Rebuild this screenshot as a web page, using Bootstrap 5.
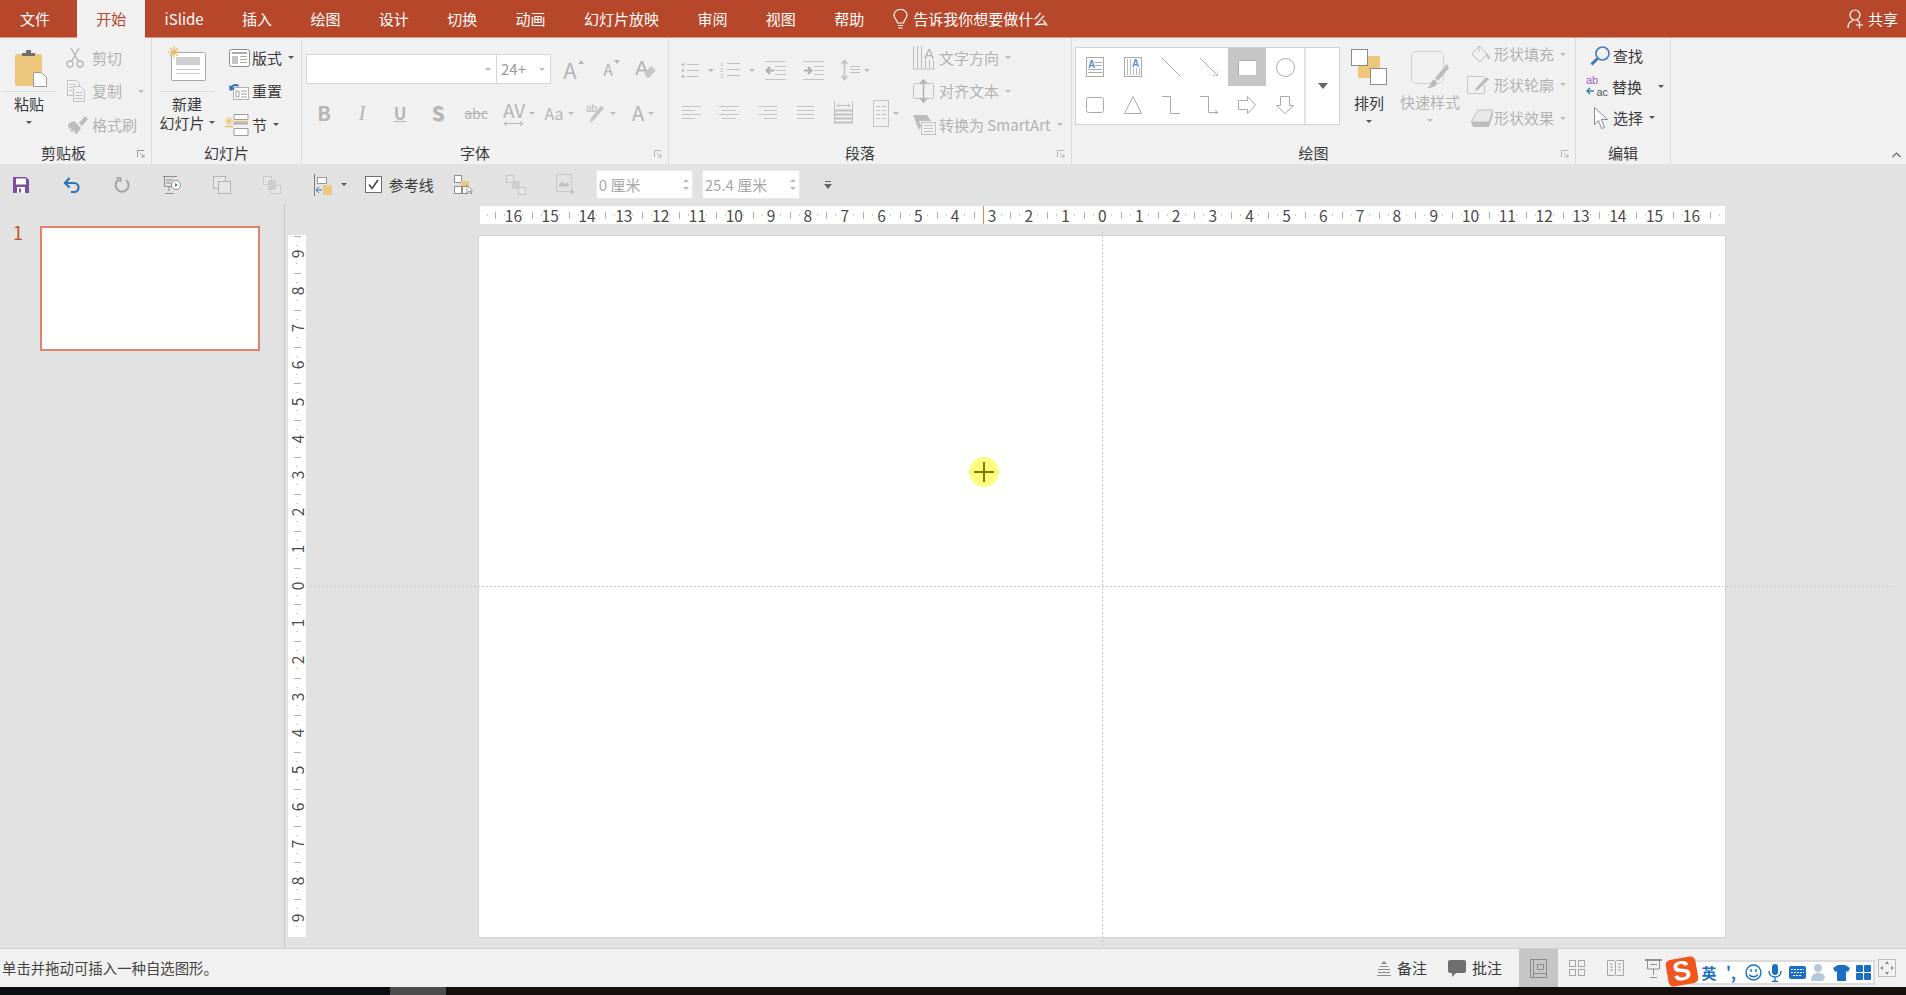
<!DOCTYPE html>
<html lang="zh-CN">
<head>
  <meta charset="UTF-8" />
  <title>PowerPoint</title>
  <link href="https://cdn.jsdelivr.net/npm/bootstrap@5.3.2/dist/css/bootstrap.min.css" rel="stylesheet">
  <style>
    html, body { height: 100%; }
    body { overflow: hidden; background: #0b0c0e; font-family: "Noto Sans CJK SC", "Liberation Sans", sans-serif; font-size: 15px; line-height: 20px; color: #3a3a3a; }
    svg { display: block; flex: none; }
    svg text { font-family: "Liberation Sans", sans-serif; }
    .app { width: 1906px; height: 995px; }

    .tabbar { height: 38px; background: #b7472a; border-bottom: 1px solid #dc9b87; color: #fff; }
    .tabx { padding: 0 19.2px; line-height: 37px; white-space: nowrap; }
    .tabx.file { padding: 0 27px 0 20px; }
    .tabx.on { background: #f1f1f1; color: #b7472a; height: 38px; margin-bottom: -1px; }
    .tellme { margin-left: 10px; line-height: 37px; gap: 5px; }
    .sharebox { margin-left: auto; padding-right: 8px; gap: 4px; line-height: 37px; }

    .ribbon { height: 126px; background: #f1f1f1; }
    .rgroup { border-right: 1px solid #dcdcdc; flex: none; }
    .g1 { width: 152px; } .g2 { width: 150px; } .g3 { width: 367px; } .g4 { width: 403px; } .g5 { width: 504px; } .g6 { width: 95px; }
    .rbody { height: 104px; }
    .rlabel { height: 22px; line-height: 22px; text-align: center; position: relative; }
    .lab24 { padding-right: 24px; } .lab20 { padding-right: 20px; }
    .launch { position: absolute; right: 6px; top: 8px; }
    .off { color: #b2b2b2; }
    .caret { width: 0; height: 0; border-left: 3px solid transparent; border-right: 3px solid transparent; border-top: 3px solid #555; flex: none; }
    .off .caret, .caret.dim { border-top-color: #bbb; }

    .bigbtn { flex: none; }
    .bigtop { height: 54px; border-bottom: 1px solid #dcdcdc; }
    .pastetop { padding: 12px 0 0 3px; }
    .bigtxt { line-height: 19px; white-space: nowrap; }
    .tp2 { padding-top: 2px; }
    .b1 { width: 54px; margin-left: 2px; }
    .b2 { width: 56px; margin-left: 7px; }
    .stk { padding-top: 3px; flex: none; }
    .itm { height: 33.5px; white-space: nowrap; }
    .ico { width: 26px; flex: none; }
    .ico27 { width: 27px; flex: none; }
    .s1 { margin-left: 10px; }
    .s2 { margin-left: 10px; }
    .capgap { margin-left: 6px; }

    .fontarea { margin-left: 3px; padding-top: 16px; }
    .fbox { height: 30px; background: #fff; border: 1px solid #d6d6d6; padding: 0 5px 0 4px; color: #9a9a9a; }
    .fname { width: 190px; margin-left: 1px; border-right: 0; justify-content: flex-end; }
    .fsize { width: 55px; justify-content: space-between; }
    .fcell { height: 30px; font-size: 20px; color: #b5b5b5; }
    .w38 { width: 38px; } .w42 { width: 42px; } .w28 { width: 28px; } .w46 { width: 46px; } .w48 { width: 48px; }
    .hang { margin-left: 4px; margin-right: -10px; }
    .hang2 { margin-left: 9px; margin-right: -15px; }
    .sup { margin-left: 1px; margin-right: -7px; margin-bottom: 14px; }
    .frow2 { margin-top: 14px; }
    .fb { font-weight: 700; }
    .fi { font-style: italic; font-family: "Liberation Serif", serif; }
    .fu { text-decoration: underline; font-size: 17px; font-weight: 700; }
    .fs { font-weight: 700; text-shadow: 1px 1px 0 #ccc; }
    .fabc { text-decoration: line-through; font-size: 14px; }
    .fav { font-size: 19px; line-height: 20px; }
    .faa { font-size: 16px; }
    .fbig { font-size: 22px; }

    .paraleft { width: 244px; flex: none; padding-top: 17px; }
    .prow1 { height: 30px; margin-left: 2px; }
    .prow2 { height: 30px; margin-left: 3px; margin-top: 13px; }

    .gallery { margin: 9px 0 0 3px; width: 265px; height: 78px; background: #fff; border: 1px solid #d2d2d2; flex: none; }
    .gcells { width: 228px; display: grid; grid-template-columns: repeat(6, 38px); grid-auto-rows: 38px; }
    .gcell.sel { background: #c6c6c6; }
    .gscroll { width: 36px; border-left: 2px solid #e2e2e2; }
    .tri { width: 0; height: 0; border-left: 5px solid transparent; border-right: 5px solid transparent; border-top: 6px solid #666; }
    .arr { width: 50px; margin-left: 4px; padding-top: 11px; flex: none; }
    .qstyle { width: 60px; margin-left: 6px; padding-top: 13px; flex: none; }
    .bigtxt2 { line-height: 19px; white-space: nowrap; }
    .qtxt { padding-top: 3px; }
    .s3 { margin-left: 7px; padding-top: 1px; flex: none; }
    .s3 .itm { height: 30.5px; }
    .s3 .itm.low { margin-top: 3px; }
    .s4 { margin-left: 10px; padding-top: 2px; }
    .s4 .itm { height: 31px; }
    .chev { padding: 0 5px 6px 0; }

    .work { height: 784px; background: #e2e2e2; position: relative; overflow: hidden; }
    .qat { height: 41px; flex: none; }
    .qfirst { gap: 30.3px; padding-left: 11px; }
    .qi { width: 20px; flex: none; }
    .chk { margin-left: 18px; gap: 7px; }
    .qs1 { margin-left: 20px; } .qs2 { margin-left: 32px; } .qs3 { margin-left: 30px; }
    .qin { width: 97px; height: 29px; background: #fff; border: 1px solid #e8e8e8; padding: 0 3px 0 2px; color: #a8a8a8; white-space: nowrap; justify-content: space-between; }
    .qin1 { margin-left: 20px; } .qin2 { margin-left: 9px; width: 98px; }
    .spin i { display: block; width: 0; height: 0; border-left: 3px solid transparent; border-right: 3px solid transparent; }
    .spin i:first-child { border-bottom: 3px solid #bbb; margin-bottom: 5px; }
    .spin i:last-child { border-top: 3px solid #bbb; }
    .qdrop { margin-left: 24px; }

    .mainrow { height: 743px; }
    .leftpane { width: 285px; flex: none; border-right: 1px solid #c8c8c8; margin-top: -1px; padding: 22px 0 0 13px; }
    .slidenum { color: #c0502f; width: 27px; line-height: 20px; font-size: 18px; margin-top: -4px; }
    .thumb { width: 220px; height: 125px; background: #fff; border: 2px solid #e2826b; }
    .canvasarea { flex: 1 1 auto; position: relative; }
    .hruler { width: 1245px; height: 18px; background: #fff; margin: 1px 0 0 195px; position: relative; }
    .rowcv { margin-top: 11px; }
    .vruler { width: 18px; height: 702px; background: #fff; margin-left: 3px; padding-top: 1px; flex: none; }
    .slide { width: 1248px; height: 703px; margin-left: 172px; background: #fff; border: 1px solid #d2d2d2; flex: none; }

    .hcell, .vcell { flex: none; display: flex; align-items: center; justify-content: center; font-size: 15.5px; line-height: 18px; color: #4a4a4a; white-space: nowrap; background-repeat: no-repeat; background-image: linear-gradient(#b0b0b0, #b0b0b0), linear-gradient(#ccc, #ccc), linear-gradient(#ccc, #ccc); }
    .hcell { width: 36.82px; height: 18px; background-size: 1px 7px, 1px 2px, 1px 2px; background-position: 0 center, 9px center, 27px center; }
    .vcell { height: 36.85px; width: 18px; background-size: 7px 1px, 2px 1px, 2px 1px; background-position: center 0, center 9px, center 27px; }
    .vcell span { transform: rotate(-90deg); }
    .hedge { flex: none; height: 18px; background-repeat: no-repeat; background-image: linear-gradient(#b0b0b0, #b0b0b0), linear-gradient(#ccc, #ccc); }
    .hedgel { width: 15px; background-size: 0 0, 1px 2px; background-position: 0 center, 7px center; }
    .hedger { width: 15px; background-size: 1px 7px, 1px 2px; background-position: 0 center, 9px center; }

    .guidev { position: absolute; left: 817px; top: 23px; width: 1px; height: 720px; background: repeating-linear-gradient(to bottom, #c9c9c9 0 2px, transparent 2px 4px); }
    .guideh { position: absolute; left: 25px; top: 381px; width: 1585px; height: 1px; background: repeating-linear-gradient(to right, #c9c9c9 0 2px, transparent 2px 4px); }
    .rmark { position: absolute; left: 503px; top: 0; width: 1px; height: 18px; background: #e8825a; }
    .pointer { position: absolute; left: 683.5px; top: 252px; width: 30px; height: 30px; border-radius: 50%; background: #fdfd80; }

    .statusbar { height: 39px; background: #f1f1f1; border-top: 1px solid #d0d0d0; position: relative; }
    .stext { padding-left: 2px; font-size: 14.4px; color: #444; white-space: nowrap; }
    .sright { margin-left: auto; padding-right: 10px; height: 100%; }
    .sbtn { white-space: nowrap; gap: 6px; }
    .sgap1 { margin-left: 21px; }
    .sgap2 { margin-left: 17px; }
    .vbtn { width: 38px; height: 100%; }
    .vbtn.on { background: #c6c6c6; width: 39px; }
    .zfit { margin-left: 206px; }

    .imebar { position: absolute; left: 1686px; top: 11px; width: 189px; height: 25px; background: #fff; border: 2px solid #dcdcdc; padding-left: 10px; }
    .imeitem { width: 22px; flex: none; color: #1a6fc4; }
    .imetxt { font-weight: 700; font-size: 15px; }
    .imelogo { position: absolute; left: 1667px; top: 9px; width: 30px; height: 27px; border-radius: 5px; background: #f0561e; color: #fff; font: 900 27px/27px "Liberation Sans", sans-serif; text-align: center; transform: rotate(-10deg); }

    .bstrip { height: 8px; }
    .bs1 { width: 390px; background: #0b0d10; } .bs2 { width: 56px; background: #4c4c4c; } .bs3 { flex: 1 1 auto; background: #15100d; }
  </style>
</head>
<body>
<div class="app d-flex flex-column">

  <!-- tabs -->
  <div class="tabbar d-flex align-items-start">
    <div class="tabx file">文件</div>
    <div class="tabx on">开始</div>
    <div class="tabx">iSlide</div>
    <div class="tabx">插入</div>
    <div class="tabx">绘图</div>
    <div class="tabx">设计</div>
    <div class="tabx">切换</div>
    <div class="tabx">动画</div>
    <div class="tabx">幻灯片放映</div>
    <div class="tabx">审阅</div>
    <div class="tabx">视图</div>
    <div class="tabx">帮助</div>
    <div class="tellme d-flex align-items-center">
      <svg width="15" height="20" viewBox="0 0 15 20" fill="none" stroke="#fff" stroke-width="1.2"><path d="M4.5 14c0-3-3.5-4-3.5-8a6.5 5.5 0 0 1 13 0c0 4-3.5 5-3.5 8z"/><path d="M5 16.5h5M5.5 19h4"/></svg>
      <span>告诉我你想要做什么</span>
    </div>
    <div class="sharebox d-flex align-items-center">
      <svg width="17" height="20" viewBox="0 0 17 20" fill="none" stroke="#fff" stroke-width="1.2"><circle cx="8" cy="6" r="5"/><path d="M1 19c0-5 2-6 5-7.5M10 11.5l2 1M9 16h7M12.5 12.5v7"/></svg>
      <span>共享</span>
    </div>
  </div>

  <!-- ribbon -->
  <div class="ribbon d-flex">
    <div class="rgroup g1">
      <div class="rbody d-flex">
        <div class="bigbtn b1 text-center">
          <div class="bigtop pastetop d-flex justify-content-center">
            <svg width="34" height="37" viewBox="0 0 34 37"><rect x="1" y="4" width="27" height="32" rx="2" fill="#edc77c"/><path d="M8 6V3h4V0h5v3h4v3z" fill="#6f6f6f"/><path d="M19.500 22.500h8l5 5v9h-13z" fill="#fff" stroke="#9a9a9a"/></svg>
          </div>
          <div class="bigtxt tp2">粘贴</div>
          <div class="d-flex justify-content-center mt-2"><div class="caret"></div></div>
        </div>
        <div class="stk s1 off d-flex flex-column">
          <div class="itm d-flex align-items-center"><div class="ico"><svg width="18" height="21" viewBox="0 0 18 21" fill="none" stroke="#b8b8b8" stroke-width="1.4"><circle cx="4" cy="17" r="3"/><circle cx="14" cy="17" r="3"/><path d="M5.500 14.500 13 1M12.500 14.500 5 1"/></svg></div><span>剪切</span></div>
          <div class="itm d-flex align-items-center"><div class="ico"><svg width="20" height="24" viewBox="0 0 20 24" fill="#f1f1f1" stroke="#c2c2c2"><path d="M1.500 1.500h9l3 3v12h-12z"/><path d="M7.500 7.500h7l4 4v11h-11z"/><path d="M3.500 5.500h6M3.500 8.500h3M3.500 11.500h3M9.500 13.500h7M9.500 16.500h7M9.500 19.500h7"/></svg></div><span>复制</span><div class="caret dim ms-3"></div></div>
          <div class="itm d-flex align-items-center"><div class="ico"><svg width="22" height="18" viewBox="0 0 22 18" fill="#bcbcbc"><path d="M13 7 19 0l3 3-6 7z"/><path d="M2 8l6-3 7 7-4 6-3-1 1-3-3 2-2-1 2-3-3 1z"/></svg></div><span>格式刷</span></div>
        </div>
      </div>
      <div class="rlabel lab24">剪贴板
        <svg class="launch" width="8" height="8" viewBox="0 0 8 8" fill="none" stroke="#9a9a9a"><path d="M.5 7V.5H7M3 3l4 4M7 4.500V7H4.500"/></svg>
      </div>
    </div>

    <div class="rgroup g2">
      <div class="rbody d-flex">
        <div class="bigbtn b2 text-center">
          <div class="bigtop d-flex justify-content-center">
            <svg class="mt-2" width="38" height="35" viewBox="0 0 38 35"><rect x="3.500" y="6.500" width="34" height="28" rx="1" fill="#fff" stroke="#a8a8a8"/><rect x="8" y="11" width="24" height="8" fill="#cfcfcf"/><path d="M8 23.500h24M8 27.500h24" stroke="#c8c8c8"/><path d="M6 0v12M0 6h12M2 2l8 8M10 2l-8 8" stroke="#eeb868" stroke-width="1.2"/></svg>
          </div>
          <div class="bigtxt tp2">新建</div>
          <div class="bigtxt d-flex align-items-center justify-content-center">幻灯片<div class="caret ms-1"></div></div>
        </div>
        <div class="stk s2 d-flex flex-column">
          <div class="itm d-flex align-items-center"><div class="ico27"><svg class="ms-1" width="21" height="18" viewBox="0 0 21 18" fill="none" stroke="#8a8a8a"><rect x=".5" y=".5" width="20" height="17" rx="2" fill="#fff"/><path d="M3 4h15" stroke="#aaa" stroke-width="2"/><rect x="3" y="7" width="6" height="8" fill="#c4c4c4" stroke="none"/><path d="M11 7.500h7M11 10.500h7M11 13.500h7" stroke="#aaa"/></svg></div><span>版式</span><div class="caret capgap"></div></div>
          <div class="itm d-flex align-items-center"><div class="ico27"><svg class="ms-1" width="20" height="17" viewBox="0 0 20 17" fill="none"><rect x="4.500" y="4.500" width="15" height="12" fill="#fff" stroke="#b0b0b0"/><path d="M7 8h3v6H7zM12 8h6M12 11h6M12 14h6" stroke="#9c9c9c"/><path d="M1.500 7a5 5 0 0 1 8-4" stroke="#2e75b6" stroke-width="2"/><path d="M0 2l1 6 5-2z" fill="#2e75b6"/></svg></div><span>重置</span></div>
          <div class="itm d-flex align-items-center"><div class="ico27"><svg width="24" height="22" viewBox="0 0 24 22" fill="none"><path d="M4 3v8M0 7h8M1 4l6 6M7 4l-6 6" stroke="#eeb868"/><path d="M9 .5h14v5H9z" fill="#fff" stroke="#9c9c9c"/><path d="M9 7.500h14M0 12.500h8" stroke="#eeb868" stroke-width="1.500"/><path d="M8 9.500h15" stroke="#aaa" stroke-width="2"/><path d="M9 14.500h14v7H9z" fill="#fff" stroke="#9c9c9c"/></svg></div><span>节</span><div class="caret capgap"></div></div>
        </div>
      </div>
      <div class="rlabel">幻灯片</div>
    </div>

    <div class="rgroup g3">
      <div class="rbody fontarea">
        <div class="d-flex align-items-center">
          <div class="d-flex">
            <div class="fbox fname d-flex align-items-center"><div class="caret dim"></div></div>
            <div class="fbox fsize d-flex align-items-center"><span>24+</span><div class="caret dim"></div></div>
          </div>
          <div class="fcell fbig w38 d-flex align-items-center justify-content-center">A<svg class="sup" width="6" height="4" viewBox="0 0 6 4" fill="#b5b5b5"><path d="M3 0l3 4H0z"/></svg></div>
          <div class="fcell w38 d-flex align-items-center justify-content-center"><span class="faa">A</span><svg class="sup" width="6" height="4" viewBox="0 0 6 4" fill="#b5b5b5"><path d="M3 4l3-4H0z"/></svg></div>
          <div class="fcell w38 d-flex align-items-center justify-content-center"><svg width="22" height="24" viewBox="0 0 22 24"><text x="0" y="18" font-size="20" fill="#b5b5b5">A</text><path d="M9 16l7-7 5 4-7 8h-2z" fill="#c8c8c8"/></svg></div>
        </div>
        <div class="frow2 d-flex">
          <div class="fcell w38 fb d-flex align-items-center justify-content-center">B</div>
          <div class="fcell w38 fi d-flex align-items-center justify-content-center">I</div>
          <div class="fcell w38 fu d-flex align-items-center justify-content-center">U</div>
          <div class="fcell w38 fs d-flex align-items-center justify-content-center">S</div>
          <div class="fcell w38 fabc d-flex align-items-center justify-content-center">abc</div>
          <div class="fcell w38 d-flex align-items-center justify-content-center"><div class="d-flex flex-column align-items-center"><span class="fav">AV</span><svg width="21" height="7" viewBox="0 0 21 7" fill="none" stroke="#b5b5b5"><path d="M1 3.500h19M4 1 1 3.500 4 6M17 1l3 2.500L17 6"/></svg></div><div class="caret dim hang"></div></div>
          <div class="fcell w42 faa d-flex align-items-center justify-content-center">Aa<div class="caret dim hang"></div></div>
          <div class="fcell w42 d-flex align-items-center justify-content-center"><svg width="20" height="20" viewBox="0 0 20 20"><text x="0" y="9" font-size="10" fill="#b5b5b5">ab</text><path d="M4 20l1-5L15 3l3 2L8 17z" fill="#c4c4c4"/></svg><div class="caret dim hang"></div></div>
          <div class="fcell w42 d-flex align-items-center justify-content-center">A<div class="caret dim hang"></div></div>
        </div>
      </div>
      <div class="rlabel lab20">字体
        <svg class="launch" width="8" height="8" viewBox="0 0 8 8" fill="none" stroke="#b5b5b5"><path d="M.5 7V.5H7M3 3l4 4M7 4.500V7H4.500"/></svg>
      </div>
    </div>

    <div class="rgroup g4">
      <div class="rbody d-flex">
        <div class="paraleft">
          <div class="prow1 d-flex align-items-center">
            <div class="w38 d-flex justify-content-center align-items-center"><svg width="18" height="17" viewBox="0 0 18 17" stroke="#c0c0c0" fill="#c0c0c0"><path d="M6 2.500h12M6 8.500h12M6 14.500h12"/><circle cx="2" cy="2.500" r="1.500" stroke="none"/><circle cx="2" cy="8.500" r="1.500" stroke="none"/><circle cx="2" cy="14.500" r="1.500" stroke="none"/></svg><div class="caret dim hang2"></div></div>
            <div class="w42 d-flex justify-content-center align-items-center"><svg width="20" height="20" viewBox="0 0 20 20" stroke="#c0c0c0"><path d="M7 3.500h13M7 9.500h13M7 15.500h13"/><text x="0" y="6" font-size="6" fill="#bbb" stroke="none">1</text><text x="0" y="12" font-size="6" fill="#bbb" stroke="none">2</text><text x="0" y="18" font-size="6" fill="#bbb" stroke="none">3</text></svg><div class="caret dim hang2"></div></div>
            <div class="w48 d-flex justify-content-center"><svg width="21" height="19" viewBox="0 0 21 19" stroke="#c4c4c4" fill="none"><path d="M0 .5h21M10 5.500h11M10 9.500h11M10 13.500h11M0 18.500h21"/><path d="M9 9.500H2M5 6 1.500 9.500 5 13" stroke="#b0b0b0" stroke-width="2"/></svg></div>
            <div class="w28 d-flex justify-content-center"><svg width="21" height="19" viewBox="0 0 21 19" stroke="#c4c4c4" fill="none"><path d="M0 .5h21M11 5.500h10M11 9.500h10M11 13.500h10M0 18.500h21"/><path d="M1 9.500h7M5 6l3.500 3.500L5 13" stroke="#b0b0b0" stroke-width="2"/></svg></div>
            <div class="w46 d-flex justify-content-center align-items-center"><svg width="19" height="22" viewBox="0 0 19 22" stroke="#c0c0c0" fill="none"><path d="M3.500 2v18M.5 5l3-3.500 3 3.500M.5 17l3 3.500 3-3.500" stroke-width="1.500"/><path d="M9 7.500h10M9 10.500h10M9 13.500h10"/></svg><div class="caret dim hang"></div></div>
          </div>
          <div class="prow2 d-flex align-items-center">
            <div class="w38 d-flex justify-content-center"><svg width="19" height="15" viewBox="0 0 19 15" stroke="#c4c4c4"><path d="M0 .5h19M0 4.500h13M0 8.500h19M0 12.500h13"/></svg></div>
            <div class="w38 d-flex justify-content-center"><svg width="20" height="15" viewBox="0 0 20 15" stroke="#c4c4c4"><path d="M0 .5h20M3 4.500h14M0 8.500h20M3 12.500h14"/></svg></div>
            <div class="w38 d-flex justify-content-center"><svg width="19" height="15" viewBox="0 0 19 15" stroke="#c4c4c4"><path d="M0 .5h19M6 4.500h13M0 8.500h19M6 12.500h13"/></svg></div>
            <div class="w38 d-flex justify-content-center"><svg width="17" height="15" viewBox="0 0 17 15" stroke="#c4c4c4"><path d="M0 .5h17M0 4.500h17M0 8.500h17M0 12.500h17"/></svg></div>
            <div class="w38 d-flex justify-content-center"><svg width="19" height="24" viewBox="0 0 19 24" stroke="#c0c0c0" fill="none"><path d="M.5 0v23M18.500 0v23M3 4.500h13M5 2.500 3 4.500l2 2M14 2.500l2 2-2 2"/><path d="M1 9.500h17M1 13.500h17M1 17.500h17M1 21.500h17" stroke-width="2"/></svg></div>
            <div class="w38 d-flex justify-content-center align-items-center"><svg width="16" height="27" viewBox="0 0 16 27" stroke="#c4c4c4" fill="none"><rect x=".5" y=".5" width="15" height="26"/><path d="M3 6.500h4M9 6.500h4M3 10.500h4M9 10.500h4M3 14.500h4M9 14.500h4M3 18.500h4M9 18.500h4"/></svg><div class="caret dim hang"></div></div>
          </div>
        </div>
        <div class="stk off d-flex flex-column">
          <div class="itm d-flex align-items-center"><div class="ico"><svg width="22" height="25" viewBox="0 0 22 25" stroke="#bcbcbc" fill="none"><path d="M.5 1v22M4.500 1v22M8.500 1v22M12.500 15v8M16.500 15v8M20.500 15v8M0 24h22"/><text x="11" y="14" font-size="15" fill="#b5b5b5" stroke="none">A</text></svg></div><span>文字方向</span><div class="caret capgap"></div></div>
          <div class="itm d-flex align-items-center"><div class="ico"><svg width="21" height="24" viewBox="0 0 21 24" stroke="#c4c4c4" fill="none"><rect x=".5" y="4.500" width="20" height="15" rx="1"/><path d="M10.500 1v22M7 5l3.500-4L14 5M7 19l3.500 4 3.500-4" stroke="#b0b0b0" stroke-width="1.500"/></svg></div><span>对齐文本</span><div class="caret capgap"></div></div>
          <div class="itm d-flex align-items-center"><div class="ico"><svg width="23" height="21" viewBox="0 0 23 21"><path d="M0 1h14l4 6H6l2 5-2 4z" fill="#bcbcbc"/><rect x="8.500" y="8.500" width="14" height="12" fill="#f1f1f1" stroke="#c4c4c4"/><path d="M11 11.500h9M11 14.500h9M11 17.500h9" stroke="#c4c4c4"/></svg></div><span>转换为 SmartArt</span><div class="caret capgap"></div></div>
        </div>
      </div>
      <div class="rlabel lab20">段落
        <svg class="launch" width="8" height="8" viewBox="0 0 8 8" fill="none" stroke="#b5b5b5"><path d="M.5 7V.5H7M3 3l4 4M7 4.500V7H4.500"/></svg>
      </div>
    </div>

    <div class="rgroup g5">
      <div class="rbody d-flex">
        <div class="gallery d-flex">
          <div class="gcells">
            <div class="gcell d-flex align-items-center justify-content-center"><svg width="18" height="20" viewBox="0 0 18 20"><rect x=".5" y=".5" width="17" height="19" fill="#fff" stroke="#aaa"/><text x="2" y="11" font-size="10" font-weight="700" fill="#5b8ec8">A</text><path d="M9 5.500h7M9 8.500h7M2 12.500h14M2 15.500h14" stroke="#aaa"/></svg></div>
            <div class="gcell d-flex align-items-center justify-content-center"><svg width="18" height="20" viewBox="0 0 18 20"><rect x=".5" y=".5" width="17" height="19" fill="#fff" stroke="#aaa"/><path d="M3.500 2v16M6.500 2v16M9.500 11v7M12.500 11v7M15.500 11v7" stroke="#bbb"/><text x="8" y="10" font-size="10" font-weight="700" fill="#5b8ec8">A</text></svg></div>
            <div class="gcell d-flex align-items-center justify-content-center"><svg width="18" height="18" viewBox="0 0 18 18" stroke="#aaa"><path d="M0 0l18 18"/></svg></div>
            <div class="gcell d-flex align-items-center justify-content-center"><svg width="18" height="18" viewBox="0 0 18 18" stroke="#aaa" fill="none"><path d="M0 0l18 18M18 13v5h-5"/></svg></div>
            <div class="gcell sel d-flex align-items-center justify-content-center"><svg width="18" height="15" viewBox="0 0 18 15"><rect width="18" height="15" fill="#fff"/><path d="M.5 15V.5H18" stroke="#aaa" fill="none"/></svg></div>
            <div class="gcell d-flex align-items-center justify-content-center"><svg width="19" height="19" viewBox="0 0 19 19" fill="#fff" stroke="#aaa"><circle cx="9.500" cy="9.500" r="9"/></svg></div>
            <div class="gcell d-flex align-items-center justify-content-center"><svg width="18" height="16" viewBox="0 0 18 16" fill="#fff" stroke="#aaa"><rect x=".5" y=".5" width="17" height="15" rx="2"/></svg></div>
            <div class="gcell d-flex align-items-center justify-content-center"><svg width="18" height="18" viewBox="0 0 18 18" fill="#fff" stroke="#aaa"><path d="M9 .5l8.500 17H.5z"/></svg></div>
            <div class="gcell d-flex align-items-center justify-content-center"><svg width="18" height="18" viewBox="0 0 18 18" fill="none" stroke="#aaa"><path d="M0 .5h8.500v17H18"/></svg></div>
            <div class="gcell d-flex align-items-center justify-content-center"><svg width="18" height="18" viewBox="0 0 18 18" fill="none" stroke="#aaa"><path d="M0 .5h8.500v16H18M15 14l3 2.500-3 1.500"/></svg></div>
            <div class="gcell d-flex align-items-center justify-content-center"><svg width="18" height="18" viewBox="0 0 18 18" fill="#fff" stroke="#aaa"><path d="M.5 4.500h9V.5l8 8.500-8 8.500v-4h-9z"/></svg></div>
            <div class="gcell d-flex align-items-center justify-content-center"><svg width="18" height="18" viewBox="0 0 18 18" fill="#fff" stroke="#aaa"><path d="M4.500.5h9v9h4L9 17.500.5 9.500h4z"/></svg></div>
          </div>
          <div class="gscroll d-flex align-items-center justify-content-center"><div class="tri"></div></div>
        </div>
        <div class="arr text-center">
          <svg class="mx-auto" width="36" height="36" viewBox="0 0 36 36"><rect x="7" y="7" width="22" height="22" fill="#edc77c"/><rect x=".5" y=".5" width="16" height="16" fill="#fff" stroke="#8a8a8a"/><rect x="19.500" y="19.500" width="16" height="16" fill="#fff" stroke="#8a8a8a"/></svg>
          <div class="bigtxt2 mt-2">排列</div>
          <div class="d-flex justify-content-center mt-2"><div class="caret"></div></div>
        </div>
        <div class="qstyle off text-center">
          <svg class="mx-auto" width="38" height="38" viewBox="0 0 38 38" fill="none"><rect x=".5" y=".5" width="32" height="32" rx="5" stroke="#d2d2d2"/><path d="M36 13 24 27l3 3 11-13z" fill="#bcbcbc"/><path d="M16 37c4-2 3-6 6-8 2-1 4 1 4 3 0 3-5 5-10 5z" fill="#bcbcbc"/></svg>
          <div class="bigtxt2 qtxt">快速样式</div>
          <div class="d-flex justify-content-center mt-2"><div class="caret"></div></div>
        </div>
        <div class="s3 off d-flex flex-column">
          <div class="itm d-flex align-items-center"><div class="ico27"><svg class="ms-1" width="20" height="19" viewBox="0 0 20 19" fill="none" stroke="#bcbcbc"><path d="M8 1 1 9l8 8 7-8zM8 1V7"/><path d="M16 9c2 2 3 4 2 5-1 0-2-2-2-5z" fill="#c8c8c8"/></svg></div><span>形状填充</span><div class="caret capgap"></div></div>
          <div class="itm d-flex align-items-center"><div class="ico27"><svg width="24" height="18" viewBox="0 0 24 18" fill="none"><path d="M17 .5H.5v17h17V9" stroke="#c8c8c8"/><path d="M8 15l1-3L19 1l3 2L11 14z" fill="#bcbcbc"/></svg></div><span>形状轮廓</span><div class="caret capgap"></div></div>
          <div class="itm low d-flex align-items-center"><div class="ico27"><svg class="ms-1" width="22" height="19" viewBox="0 0 22 19"><path d="M0 13 7 1h15l-4 12z" fill="#e8e8e8" stroke="#c0c0c0"/><path d="M0 13h18l4-12v5l-4 12H2z" fill="#bcbcbc"/></svg></div><span>形状效果</span><div class="caret capgap"></div></div>
        </div>
      </div>
      <div class="rlabel lab20">绘图
        <svg class="launch" width="8" height="8" viewBox="0 0 8 8" fill="none" stroke="#b5b5b5"><path d="M.5 7V.5H7M3 3l4 4M7 4.500V7H4.500"/></svg>
      </div>
    </div>

    <div class="rgroup g6">
      <div class="rbody">
        <div class="stk s4 d-flex flex-column">
          <div class="itm d-flex align-items-center"><div class="ico27"><svg class="ms-1" width="20" height="20" viewBox="0 0 20 20" fill="none" stroke="#3f7cb8"><circle cx="12.500" cy="7.500" r="6.500" stroke-width="1.600"/><path d="M7.500 12.500 1.500 18.500" stroke-width="3"/></svg></div><span>查找</span></div>
          <div class="itm d-flex align-items-center"><div class="ico"><svg width="23" height="25" viewBox="0 0 23 25" font-size="11"><text x="0" y="10" fill="#9a5fc0">ab</text><text x="10.500" y="22" fill="#555">ac</text><path d="M8 17H1.500M4 14l-3 3 3 3" stroke="#3f7cb8" stroke-width="1.500" fill="none"/></svg></div><span>替换</span><div class="caret ms-3"></div></div>
          <div class="itm d-flex align-items-center"><div class="ico27"><svg class="ms-2" width="14" height="22" viewBox="0 0 14 22" fill="#fff" stroke="#8a8a8a"><path d="M.5.5v17l4-4 3 8 3-1-3-8h6z"/></svg></div><span>选择</span><div class="caret capgap"></div></div>
        </div>
      </div>
      <div class="rlabel">编辑</div>
    </div>

    <div class="chev flex-grow-1 d-flex justify-content-end align-items-end">
      <svg width="9" height="6" viewBox="0 0 9 6" fill="none" stroke="#666" stroke-width="1.200"><path d="M.5 5 4.500 1l4 4"/></svg>
    </div>
  </div>

  <!-- workspace -->
  <div class="work d-flex flex-column">
    <div class="qat d-flex align-items-center">
      <div class="qfirst d-flex align-items-center">
        <div class="qi d-flex justify-content-center"><svg width="16" height="16" viewBox="0 0 16 16"><path d="M0 0h13l3 3v13H0z" fill="#7c4e9f"/><rect x="3" y="1.500" width="10" height="6" fill="#fff"/><rect x="4" y="10" width="8" height="6" fill="#fff"/><rect x="6" y="11.500" width="2" height="4" fill="#7c4e9f"/></svg></div>
        <div class="qi d-flex justify-content-center"><svg width="17" height="16" viewBox="0 0 17 16" fill="none" stroke="#2e75b6" stroke-width="2.200"><path d="M2 6h9a4.500 4.500 0 0 1 0 9H8"/><path d="M6.500 1 2 6l4.500 4.500"/></svg></div>
        <div class="qi d-flex justify-content-center"><svg width="16" height="16" viewBox="0 0 16 16" fill="none" stroke="#a5a5a5" stroke-width="2"><path d="M5 2.500a6.500 6.500 0 1 0 7 .5"/><path d="M2 .5h4.500V5"/></svg></div>
        <div class="qi d-flex justify-content-center"><svg width="19" height="18" viewBox="0 0 19 18" fill="none" stroke="#8f8f8f"><path d="M1 .5h14M2.500.5v10h9"/><path d="M4 4h7M4 7h5M7 11v4M3 17.500h9"/><circle cx="14" cy="9" r="4.500" fill="#fff"/><path d="M13 7v4l3-2z" fill="#3c9a7a" stroke="none"/></svg></div>
        <div class="qi d-flex justify-content-center"><svg width="18" height="18" viewBox="0 0 18 18" fill="#e6e6e6" stroke="#b5b5b5"><rect x=".5" y=".5" width="12" height="12"/><rect x="5.500" y="5.500" width="12" height="12"/></svg></div>
        <div class="qi d-flex justify-content-center"><svg width="18" height="18" viewBox="0 0 18 18" stroke="#c8c8c8"><rect x=".5" y=".5" width="8" height="8" fill="#e6e6e6"/><rect x="7.500" y="9.500" width="10" height="8" fill="#e6e6e6"/><rect x="5" y="4" width="8" height="10" fill="#cdcdcd" stroke="none"/></svg></div>
        <div class="qi d-flex justify-content-center"><svg width="18" height="22" viewBox="0 0 18 22"><path d="M.5 0v22" stroke="#7a7a7a"/><rect x="3.500" y="3.500" width="9" height="6" fill="#fff" stroke="#9a9a9a"/><rect x="9" y="11" width="9" height="10" fill="#edc77c"/><path d="M8 16H2M5 13l-3 3 3 3" stroke="#2e75b6" fill="none"/></svg></div>
      </div>
      <div class="caret ms-2"></div>
      <div class="chk d-flex align-items-center">
        <svg width="17" height="17" viewBox="0 0 17 17" fill="#fff"><rect x=".5" y=".5" width="16" height="16" stroke="#6f6f6f"/><path d="M4 8.500 7 12.500 13 4" fill="none" stroke="#444" stroke-width="1.600"/></svg>
        <span class="text-nowrap">参考线</span>
      </div>
      <div class="qi qs1"><svg width="20" height="20" viewBox="0 0 20 20"><rect x=".5" y=".5" width="7" height="7" fill="#fff" stroke="#8f8f8f"/><rect x="7" y="6" width="8" height="6" fill="#edc77c"/><rect x=".5" y="11.500" width="7" height="7" fill="#fff" stroke="#8f8f8f"/><rect x="8.500" y="11.500" width="5" height="7" fill="#fff" stroke="#8f8f8f"/><path d="M13 10v8l2-2 2 3 1-1-2-2h2.500z" fill="#fff" stroke="#777" stroke-width=".7"/></svg></div>
      <div class="qi qs2"><svg width="20" height="20" viewBox="0 0 20 20" stroke="#c4c4c4"><rect x=".5" y=".5" width="7" height="7" fill="#e6e6e6"/><rect x="6" y="6" width="8" height="8" fill="#cfcfcf" stroke="none"/><rect x="12.500" y="12.500" width="7" height="7" fill="#e6e6e6"/></svg></div>
      <div class="qi qs3"><svg width="20" height="22" viewBox="0 0 20 22" fill="none" stroke="#bcbcbc"><rect x=".5" y=".5" width="15" height="17" stroke-dasharray="2 1"/><path d="M3 12l3-4 3 3 2-2 2 3z" fill="#c4c4c4"/><path d="M13 18h6M16 15v6"/></svg></div>
      <div class="qin qin1 d-flex align-items-center"><span>0 厘米</span><div class="spin"><i></i><i></i></div></div>
      <div class="qin qin2 d-flex align-items-center"><span>25.4 厘米</span><div class="spin"><i></i><i></i></div></div>
      <div class="qdrop"><svg width="8" height="8" viewBox="0 0 8 8" fill="#666"><path d="M1 0h6v1H1zM0 3h8L4 8z"/></svg></div>
    </div>

    <div class="mainrow d-flex">
      <div class="leftpane d-flex align-items-start">
        <div class="slidenum">1</div>
        <div class="thumb"></div>
      </div>
      <div class="canvasarea">
        <div class="hruler d-flex" id="hr">
          <div class="rmark"></div>
        </div>
        <div class="rowcv d-flex">
          <div class="vruler" id="vr"></div>
          <div class="slide"></div>
        </div>
        <div class="guidev"></div>
        <div class="guideh"></div>
        <div class="pointer d-flex align-items-center justify-content-center">
          <svg width="20" height="20" viewBox="0 0 20 20" fill="none" stroke="#7d7d00" stroke-width="2"><path d="M10 0v20M0 10h20"/></svg>
        </div>
      </div>
    </div>
  </div>

  <!-- status bar -->
  <div class="statusbar d-flex align-items-center">
    <div class="stext">单击并拖动可插入一种自选图形。</div>
    <div class="sright d-flex align-items-center">
      <div class="sbtn d-flex align-items-center"><svg width="14" height="15" viewBox="0 0 14 15" stroke="#8a8a8a"><path d="M7 0l3 3H4z" fill="#8a8a8a" stroke="none"/><path d="M3 5.500h8M1 8.500h12M1 11.500h12M0 14.500h14"/></svg><span>备注</span></div>
      <div class="sbtn sgap1 d-flex align-items-center"><svg width="18" height="17" viewBox="0 0 18 17" fill="#6e6e6e"><path d="M2 0h14a2 2 0 0 1 2 2v9a2 2 0 0 1-2 2H8l-4 4v-4H2a2 2 0 0 1-2-2V2a2 2 0 0 1 2-2z"/></svg><span>批注</span></div>
      <div class="vbtn on sgap2 d-flex align-items-center justify-content-center"><svg width="17" height="19" viewBox="0 0 17 19" fill="none" stroke="#8a8a8a"><rect x=".5" y=".5" width="16" height="18"/><path d="M3.500 1v17M7.500 5.500h6v5h-6zM3.500 14.500h13"/></svg></div>
      <div class="vbtn d-flex align-items-center justify-content-center"><svg width="16" height="16" viewBox="0 0 16 16" fill="none" stroke="#a5a5a5"><rect x=".5" y=".5" width="6" height="6"/><rect x="9.500" y=".5" width="6" height="6"/><rect x=".5" y="9.500" width="6" height="6"/><rect x="9.500" y="9.500" width="6" height="6"/></svg></div>
      <div class="vbtn d-flex align-items-center justify-content-center"><svg width="17" height="16" viewBox="0 0 17 16" fill="none" stroke="#a5a5a5"><path d="M.5.5h7l1 1 1-1h7v15h-7l-1-1-1 1h-7zM8.500 1.500v13M3 4h3M3 7h3M3 10h3M11 4h3M11 7h3M11 10h3"/></svg></div>
      <div class="vbtn d-flex align-items-center justify-content-center"><svg width="17" height="19" viewBox="0 0 17 19" fill="none" stroke="#8f8f8f"><path d="M0 1h17" stroke-width="2"/><path d="M2.500 2v8h12V2M5 5.500h7M8.500 10v6M5 18.500h7"/></svg></div>
      <div class="zfit"><svg width="18" height="18" viewBox="0 0 18 18" fill="#8f8f8f" stroke="#bcbcbc"><rect x=".5" y=".5" width="17" height="17" fill="none"/><path d="M9 2l2 3H7zM9 16l2-3H7zM2 9l3-2v4zM16 9l-3-2v4z" stroke="none"/></svg></div>
    </div>
    <div class="imebar d-flex align-items-center">
      <div class="imeitem imetxt text-center">英</div>
      <div class="imeitem imetxt text-center">',</div>
      <div class="imeitem d-flex justify-content-center"><svg width="17" height="17" viewBox="0 0 17 17" fill="none" stroke="#1a6fc4" stroke-width="1.400"><circle cx="8.500" cy="8.500" r="7.500"/><path d="M6 5v3M11 5v3M4.500 10.500c1 3 7 3 8 0"/></svg></div>
      <div class="imeitem d-flex justify-content-center"><svg width="14" height="18" viewBox="0 0 14 18" fill="#1a6fc4"><rect x="4" y="0" width="6" height="11" rx="3"/><path d="M1 7c0 8 12 8 12 0M7 13v4M4 17.500h6" fill="none" stroke="#1a6fc4" stroke-width="1.400"/></svg></div>
      <div class="imeitem d-flex justify-content-center"><svg width="17" height="13" viewBox="0 0 17 13"><rect width="17" height="13" rx="2" fill="#1a6fc4"/><path d="M2 3.500h13M2 6.500h13M4 9.500h9" stroke="#fff" stroke-dasharray="2 1"/></svg></div>
      <div class="imeitem d-flex justify-content-center"><svg width="16" height="17" viewBox="0 0 16 17" fill="#b5c8da"><circle cx="7" cy="4" r="4"/><path d="M0 17c0-6 3-8 7-8s6 1 7 4l-2 4z"/></svg></div>
      <div class="imeitem d-flex justify-content-center"><svg width="17" height="16" viewBox="0 0 17 16" fill="#1a6fc4"><path d="M5 0h7l5 3-2 4-2-1v10H4V6L2 7 0 3z"/></svg></div>
      <div class="imeitem d-flex justify-content-center"><svg width="15" height="15" viewBox="0 0 15 15" fill="#1a6fc4"><rect width="7" height="7" rx="1"/><rect x="8" width="7" height="7" rx="1"/><rect y="8" width="7" height="7" rx="1"/><rect x="8" y="8" width="7" height="7" rx="1"/></svg></div>
    </div>
    <div class="imelogo">S</div>
  </div>

  <div class="bstrip d-flex">
    <div class="bs1"></div><div class="bs2"></div><div class="bs3"></div>
  </div>
</div>

<script>
  // rulers: one cell per centimetre, ticks are the cell background, number in the middle
  function rulerCell(n, vertical) {
    const cell = document.createElement("div");
    cell.className = vertical ? "vcell" : "hcell";
    const label = document.createElement("span");
    label.textContent = Math.abs(n);
    cell.appendChild(label);
    return cell;
  }
  function edge(cls) {
    const el = document.createElement("div");
    el.className = "hedge " + cls;
    return el;
  }
  const hr = document.getElementById("hr");
  hr.appendChild(edge("hedgel"));
  for (let n = -16; n <= 16; n++) hr.appendChild(rulerCell(n, false));
  hr.appendChild(edge("hedger"));
  const vr = document.getElementById("vr");
  for (let n = -9; n <= 9; n++) vr.appendChild(rulerCell(n, true));
</script>
<script src="https://cdn.jsdelivr.net/npm/bootstrap@5.3.2/dist/js/bootstrap.bundle.min.js"></script>
</body>
</html>
